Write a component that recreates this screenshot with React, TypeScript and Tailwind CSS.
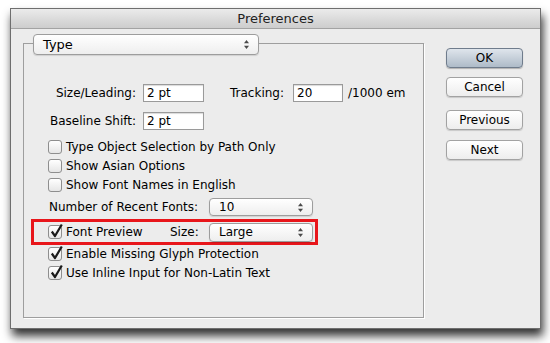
import React from "react";

const Arrows = () => (
  <svg width="7" height="11" viewBox="0 0 7 11" className="shrink-0">
    <path d="M3.5 1 L6 4.2 L1 4.2 Z" fill="#4a4a4a" />
    <path d="M3.5 10 L6 6.8 L1 6.8 Z" fill="#4a4a4a" />
  </svg>
);

const Select = ({ value, className }: { value: string; className: string }) => (
  <div
    className={
      "flex items-center justify-between rounded-[4px] border border-[#9d9d9d] bg-gradient-to-b from-white to-[#eeeeee] pl-[9px] pr-[8px] shadow-[0_1px_1px_rgba(0,0,0,0.12)] " +
      className
    }
  >
    <span>{value}</span>
    <Arrows />
  </div>
);

const Checkbox = ({ checked }: { checked?: boolean }) => (
  <div className="relative h-[14px] w-[14px] shrink-0 rounded-[3px] border border-[#8e8e8e] bg-gradient-to-b from-white to-[#e6e6e6]">
    {checked && (
      <svg
        width="15"
        height="16"
        viewBox="0 0 15 16"
        className="absolute left-[0px] top-[-3px]"
      >
        <path
          d="M2.8 8.5 L6 13 L12.8 1.5"
          fill="none"
          stroke="#1a1a1a"
          strokeWidth="2.2"
          strokeLinejoin="round"
        />
      </svg>
    )}
  </div>
);

const CheckRow = ({ label, checked }: { label: string; checked?: boolean }) => (
  <div className="flex h-[19px] items-center gap-[4px] pl-[24px]">
    <Checkbox checked={checked} />
    <span>{label}</span>
  </div>
);

const TextInput = ({ value, className }: { value: string; className: string }) => (
  <div
    className={
      "flex h-[18px] items-center border border-[#9a9a9a] bg-white pl-[3px] shadow-[inset_0_1px_1px_rgba(0,0,0,0.15)] " +
      className
    }
  >
    {value}
  </div>
);

const Button = ({ label, primary }: { label: string; primary?: boolean }) => (
  <div
    className={
      "flex h-[20px] w-[77px] items-center justify-center rounded-[4px] border " +
      (primary
        ? "border-[#6f7c8c] bg-gradient-to-b from-[#dfe5ec] to-[#aebbc8] shadow-[0_1px_1px_rgba(0,0,0,0.25)]"
        : "border-[#a2a2a2] bg-gradient-to-b from-white to-[#ededed] shadow-[0_1px_1px_rgba(0,0,0,0.15)]")
    }
  >
    {label}
  </div>
);

export default function App() {
  return (
    <div
      className="h-[343px] w-[550px] bg-white pl-[10px] pt-[8px] text-[12px] text-black"
      style={{ fontFamily: '"DejaVu Sans", "Noto Sans", sans-serif' }}
    >
      <div className="flex h-[321px] w-[531px] flex-col border border-[#6e6e6e] bg-[#ececec] shadow-[2px_7px_9px_rgba(0,0,0,0.8)]">
        {/* title bar */}
        <div className="flex h-[20px] items-center justify-center border-b border-[#a3a3a3] bg-gradient-to-b from-[#ebebeb] to-[#cdcdcd] text-[13px] text-[#222]">
          Preferences
        </div>

        <div className="flex flex-1 pl-[12px] pr-[17px] pt-[14px] pb-[10px]">
          {/* group box */}
          <div className="flex w-[401px] flex-col border border-[#9e9e9e] shadow-[1px_1px_0_white]">
            <Select value="Type" className="-mt-[10px] ml-[9px] h-[21px] w-[226px] pl-[7px] text-[13px]" />

            <div className="mt-[29px] flex items-center">
              <div className="w-[112px] text-right">Size/Leading:</div>
              <TextInput value="2 pt" className="ml-[7px] w-[61px]" />
              <div className="ml-[26px] w-[63px]">Tracking:</div>
              <TextInput value="20" className="w-[50px]" />
              <div className="ml-[5px]">/1000 em</div>
            </div>

            <div className="mt-[10px] flex items-center">
              <div className="w-[112px] text-right">Baseline Shift:</div>
              <TextInput value="2 pt" className="ml-[7px] w-[61px]" />
            </div>

            <div className="mt-[7px] flex flex-col">
              <CheckRow label="Type Object Selection by Path Only" />
              <CheckRow label="Show Asian Options" />
              <CheckRow label="Show Font Names in English" />
            </div>

            <div className="mt-[4px] flex items-center pl-[25px]">
              <div className="w-[160px]">Number of Recent Fonts:</div>
              <Select value="10" className="h-[18px] w-[104px]" />
            </div>

            <div className="ml-[7px] mt-[3px] flex h-[26px] w-[287px] items-center border-[3px] border-[#e8161b] pl-[14px]">
              <div className="flex w-[122px] items-center gap-[4px]">
                <Checkbox checked />
                <span>Font Preview</span>
              </div>
              <div className="w-[39px]">Size:</div>
              <Select value="Large" className="h-[19px] w-[104px]" />
            </div>

            <div className="-mt-[1px] flex flex-col">
              <CheckRow label="Enable Missing Glyph Protection" checked />
              <CheckRow label="Use Inline Input for Non-Latin Text" checked />
            </div>
          </div>

          {/* buttons */}
          <div className="ml-auto flex flex-col pt-[5px]">
            <Button label="OK" primary />
            <div className="mt-[9px]">
              <Button label="Cancel" />
            </div>
            <div className="mt-[13px]">
              <Button label="Previous" />
            </div>
            <div className="mt-[10px]">
              <Button label="Next" />
            </div>
          </div>
        </div>
      </div>
    </div>
  );
}
